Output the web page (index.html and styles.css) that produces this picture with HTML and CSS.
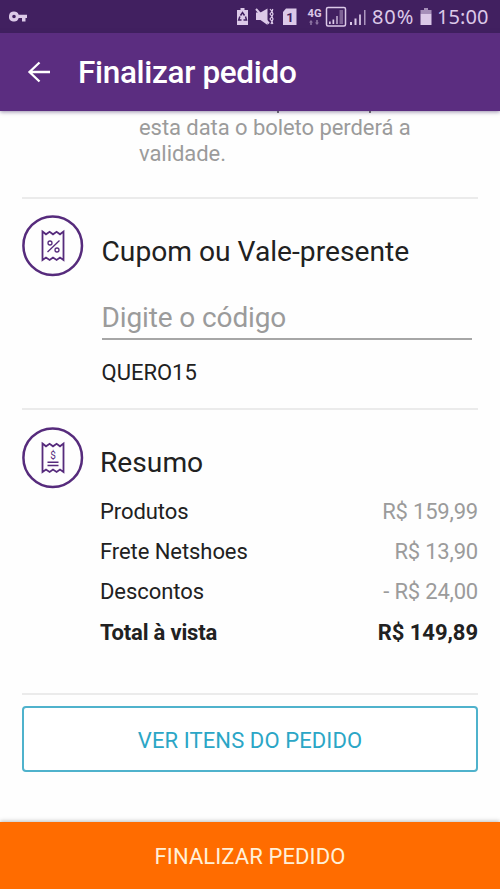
FILE: index.html
```html
<!DOCTYPE html>
<html lang="pt-BR">
<head>
<meta charset="utf-8">
<title>Finalizar pedido</title>
<link rel="stylesheet" href="styles.css">
</head>
<body>
<div class="screen">
  <div class="status">
    <svg class="key" width="20" height="14" viewBox="0 0 20 14"><path fill-rule="evenodd" d="M5 2.500a5 5 0 1 0 4.700 6.500H13V12.500h3.500V9H18V5.800H9.700A5 5 0 0 0 5 2.500ZM5 5.700a1.800 1.800 0 1 1 0 3.600a1.800 1.800 0 0 1 0-3.600Z"/></svg>
    <svg class="tray" width="134" height="34" viewBox="0 0 134 34">
      <path d="M10.500 8h4v2H18v15H7V10h3.500z"/>
      <g fill="none" stroke="#412060" stroke-width="1.500"><path d="M10.500 15.500l2-3 2 3M15.500 16.500l1 3.500h-3M11.500 20H8.700l1.200-3.500"/></g>
      <path d="M26 12.500h4.500l7-4V25l-7-5H26z"/>
      <path d="M26 9l13 14.500" stroke="#dcc9e8" stroke-width="2"/>
      <path d="M40 9l2 2.500-2 2.500 2 2.500-2 2.500 2 2.500-1 2.500M42.800 9l-.8 2.500 1 2.500-1 2.500 1 2.500-1 2.500.8 2.500" fill="none" stroke="#dcc9e8" stroke-width="1.200"/>
      <path d="M56 8.500h10.500V25H53V12z"/>
      <text class="sim" x="60" y="21.500" text-anchor="middle">1</text>
      <text class="net" x="77.500" y="16.800" textLength="14" lengthAdjust="spacingAndGlyphs">4G</text>
      <path opacity=".5" d="M81 20l2 2.500h-1.200V25h-1.600v-2.500H79zM86.200 20h1.600v2.500H89L87 25l-2-2.500h1.200z"/>
      <rect x="96.500" y="7.500" width="19" height="18.500" rx="1.500" fill="none" stroke="#dcc9e8" stroke-width="1.500"/>
      <path d="M99 21.500h1.700V24H99zM102.500 19.500h1.700V24h-1.700z"/><path opacity=".65" d="M106 16h2v8h-2z"/><path opacity=".4" d="M109.500 10h3.500v14h-3.500z"/>
      <path d="M120 22h2v3h-2zM124.500 18.500h2V25h-2z"/><path opacity=".85" d="M129 14.500h2V25h-2z"/>
    </svg>
    <svg class="bar" width="5" height="34" viewBox="0 0 5 34"><path opacity=".7" d="M-.5 10h2v15h-2z"/></svg>
    <span class="pct">80%</span>
    <svg class="batt" width="12" height="34" viewBox="0 0 12 34"><path opacity=".65" d="M4 8h4v2h3.500v3.500H.5V10H4z"/><path d="M.5 13.500h11V25H.5z"/></svg>
    <span class="clock">15:00</span>
  </div>
  <header class="bar-top">
    <svg class="back" width="24" height="24" viewBox="0 0 24 24"><path d="M23 12H3M12.500 2.500L2.500 12l10 9.500" fill="none" stroke="#fff" stroke-width="2.300"/></svg>
    <h1>Finalizar pedido</h1>
  </header>
  <main>
    <div class="notice">
      <svg class="tails" width="100" height="3" viewBox="0 0 100 3"><path d="M0 0h2v2H0zM92 0h2v2h-2z" fill="#777"/></svg>
      <p>esta data o boleto perderá a<br>validade.</p>
    </div>
    <section class="coupon">
      <svg class="round" width="62" height="62" viewBox="0 0 62 62"><g fill="none" stroke="#562b7c">
        <circle cx="30.700" cy="30.700" r="29.300" stroke-width="2.500"/>
        <path stroke-width="1.800" d="M20.500 16.500l3.500 2.800 3.600-2.500 3.400 2.500 3.600-2.500 3.400 2.500 3.500-2.800v28.500l-3.500-2.400-3.400 2.400-3.600-2.400-3.400 2.400-3.600-2.400-3.500 2.400z"/>
        <circle cx="28" cy="28" r="2" stroke-width="1.300"/><circle cx="35" cy="35" r="2" stroke-width="1.300"/><path stroke-width="1.300" d="M37.500 25.500L25.500 37"/></g></svg>
      <div class="body">
        <h2>Cupom ou Vale-presente</h2>
        <div class="field">Digite o código</div>
        <div class="code">QUERO15</div>
      </div>
    </section>
    <section class="summary">
      <svg class="round" width="62" height="62" viewBox="0 0 62 62"><g fill="none" stroke="#562b7c">
        <circle cx="30.700" cy="30.700" r="29.300" stroke-width="2.500"/>
        <path stroke-width="1.800" d="M20.500 16.500l3.500 2.800 3.600-2.500 3.400 2.500 3.600-2.500 3.400 2.500 3.500-2.800v28.500l-3.500-2.400-3.400 2.400-3.600-2.400-3.400 2.400-3.600-2.400-3.500 2.400z"/>
        <path stroke-width="1.500" d="M25.500 35.300h11M25.500 38.500h11"/></g><text class="dollar" x="31" y="32" text-anchor="middle">$</text></svg>
      <div class="body">
        <h2>Resumo</h2>
        <dl>
          <div class="row"><dt>Produtos</dt><dd>R$ 159,99</dd></div>
          <div class="row"><dt>Frete Netshoes</dt><dd>R$ 13,90</dd></div>
          <div class="row"><dt>Descontos</dt><dd>- R$ 24,00</dd></div>
          <div class="row total"><dt>Total à vista</dt><dd>R$ 149,89</dd></div>
        </dl>
      </div>
    </section>
    <button class="items"><span>VER ITENS DO PEDIDO</span></button>
  </main>
  <button class="finish"><span>FINALIZAR PEDIDO</span></button>
</div>
</body>
</html>
```
FILE: styles.css
```css
* { box-sizing: border-box; }
body { margin: 0; font-family: Roboto, sans-serif; color: #212121; background: #fefefe; }
h1, h2, p, dl, dt, dd { margin: 0; font-weight: 400; }
span, dt, dd, h1, h2 { white-space: nowrap; }
button { font: inherit; cursor: pointer; }
.screen { height: 889px; display: flex; flex-direction: column; overflow: hidden; }
.status { height: 33px; flex: none; background: #412060; display: flex; color: #dcc9e8; fill: #dcc9e8; font: 20px/34px "Noto Sans", sans-serif; }
.key { margin: 9px 0 0 9px; }
.tray { margin-left: 201px; }
.pct { margin-left: 3px; width: 46px; letter-spacing: .9px; }
.batt { margin-left: 2px; }
.clock { margin-left: 5px; letter-spacing: .1px; }
.sim { font: 700 13px Roboto, sans-serif; fill: #412060; }
.net { font: 700 11px Roboto, sans-serif; }
.bar-top { height: 78px; flex: none; display: flex; align-items: center; background: #5b2d80; color: #fff; box-shadow: 0 1px 4px rgba(50, 30, 90, .5); position: relative; padding-left: 27px; }
h1 { font-size: 31.500px; line-height: 40px; font-weight: 500; margin: 1px 0 0 27px; letter-spacing: -.33px; }
main { flex: 1; padding: 0 22px; }
.notice { height: 88px; border-bottom: 2px solid #ebebeb; padding-left: 117px; color: #9b9b9b; font-size: 22px; line-height: 25.500px; letter-spacing: -.06px; }
.notice p { margin-top: 1px; }
.tails { display: block; margin-left: 138px; }
.coupon, .summary { display: flex; }
.coupon { height: 211px; border-bottom: 2px solid #ebebeb; padding-top: 16px; }
.summary { height: 285px; border-bottom: 2px solid #ebebeb; padding-top: 17px; }
.round { flex: none; }
.dollar { font: 10px Roboto, sans-serif; fill: #562b7c; }
.body { flex: 1; margin-left: 17px; }
h2 { font-size: 28.200px; line-height: 34px; padding-top: 20px; }
.field { height: 54px; margin: 17px 6px 0 0; padding-top: 15px; border-bottom: 2px solid #a6a6a6; font-size: 28px; line-height: 34px; color: #9b9b9b; letter-spacing: -.12px; }
.coupon .body { margin-left: 17.500px; }
.code { font-size: 22px; line-height: 26px; margin-top: 20px; }
.summary .body { margin-left: 16px; }
.summary h2 { padding-top: 19px; }
dl { margin-top: 12px; }
.row { display: flex; justify-content: space-between; font-size: 22px; line-height: 40.200px; letter-spacing: -.07px; }
dd { color: #9b9b9b; letter-spacing: -.2px; }
.total { letter-spacing: -.18px; }
.total dt, .total dd { font-weight: 700; color: #212121; }
.total dd { letter-spacing: -.05px; }
.items { display: block; width: 100%; height: 66px; margin-top: 11px; border: 2px solid #4fb2cc; border-radius: 4px; background: #fff; color: #2ba6c6; font-size: 22px; letter-spacing: .1px; padding-top: 3px; }
.finish { height: 67px; flex: none; border: 0; background: #ff6c00; color: #fff0d8; font-size: 22px; letter-spacing: .1px; padding-top: 3px; box-shadow: 0 -1px 4px rgba(0, 0, 0, .25); }
```
